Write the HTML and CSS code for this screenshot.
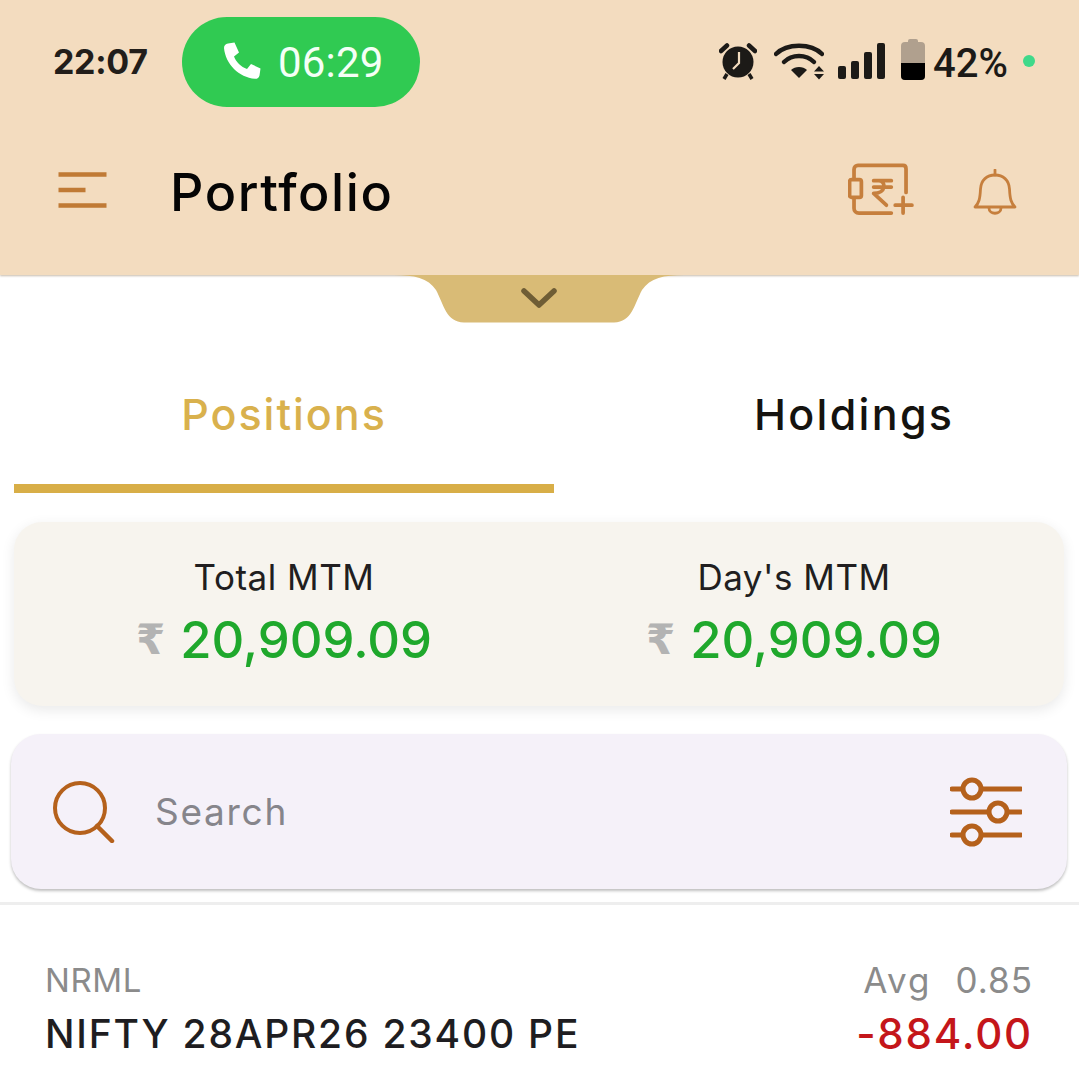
FILE: index.html
```html
<!DOCTYPE html>
<html lang="en">
<head>
<meta charset="utf-8">
<title>Portfolio</title>
<link rel="stylesheet" href="styles.css">
</head>
<body>
<div class="page">
  <header class="header">
    <div class="status">
      <span class="time">22:07</span>
      <div class="call">
        <svg class="call-icon" viewBox="0 0 40 40"><path d="M6 2.500 12.500 1.500 17 11.500 12 15.500C14 21 19 26 25 28L29 23 38.500 27.500 37.500 34.500C37 37 35 38 33 37.800 17 36.500 3.500 23 2 7 2 4.500 3.500 3 6 2.500Z" fill="#fff"/></svg>
        <span>06:29</span>
      </div>
      <div class="status-right">
        <svg class="alarm" viewBox="0 0 38 38"><circle cx="19" cy="20" r="15.500" fill="#1c1a17"/><path d="M2 9 8 3.500M36 9 30 3.500" stroke="#1c1a17" stroke-width="4.500" stroke-linecap="round"/><path d="M8 32 5 37M30 32 33 37" stroke="#1c1a17" stroke-width="3.500"/><path d="M20 10V21L14 27" fill="none" stroke="#f3dcbf" stroke-width="2.200"/></svg>
        <svg class="wifi" viewBox="0 0 50 38"><g fill="none" stroke="#1c1a17" stroke-width="4.500" stroke-linecap="round"><path d="M2 12C13 1 37 1 48 12"/><path d="M10 20C18 12 32 12 40 20"/></g><path d="M17 28C21 24 29 24 33 28L25 36Z" fill="#1c1a17"/><path d="M45 24 40 29.500H50ZM45 37.500 40 32H50Z" fill="#1c1a17"/></svg>
        <div class="signal"><i class="s1"></i><i class="s2"></i><i class="s3"></i><i class="s4"></i></div>
        <div class="battery"><b></b></div>
        <span class="pct">42%</span>
        <span class="dot"></span>
      </div>
    </div>
    <div class="appbar">
      <svg class="menu" viewBox="0 0 48 36"><path d="M0 2.500H48M0 18H27M0 33.500H48" stroke="#c07a35" stroke-width="4.500" fill="none"/></svg>
      <h1 class="title">Portfolio</h1>
      <svg class="wallet" viewBox="0 0 68 54"><g fill="none" stroke="#c67f3d" stroke-width="3.800" stroke-linecap="round" stroke-linejoin="round"><path d="M6 16V6.500C6 4 8 2.500 10 2.500H56C58 2.500 59 4 59 6V30"/><path d="M6 36V46C6 49 8 51 11 51H44"/><rect x="1.500" y="17" width="12" height="18" rx="2"/><path d="M26 18H44M26 24.500H44M31 18C39 18 39 31 26 31L39 43"/><path d="M56 35V51M48 43H65"/></g></svg>
      <svg class="bell" viewBox="0 0 44 48"><g fill="none" stroke="#c67f3d" stroke-width="2.800" stroke-linecap="round" stroke-linejoin="round"><path d="M2 38C6 34 7 30 7.500 20 8 11 14 6 22 6S36 11 36.500 20C37 30 38 34 42 38Z"/><path d="M22 1V6M16 39C16 46 28 46 28 39"/></g></svg>
    </div>
  </header>
  <div class="notch-wrap">
    <svg class="notch" viewBox="0 0 290 48"><path d="M0 0H290C270 0 256 3 248 15 240 30 238 47 220 47.500H70C52 47 50 30 42 15 34 3 20 0 0 0Z" fill="#d9bb76"/><path d="M130 16 145 30 160 16" fill="none" stroke="#6f5d35" stroke-width="5.500" stroke-linecap="round" stroke-linejoin="round"/></svg>
  </div>
  <nav class="tabs">
    <div class="tab active">Positions</div>
    <div class="tab other">Holdings</div>
  </nav>
  <section class="mtm">
    <div class="mtm-col">
      <div class="mtm-label">Total MTM</div>
      <div class="mtm-value"><span class="rupee">₹</span><span>20,909.09</span></div>
    </div>
    <div class="mtm-col">
      <div class="mtm-label">Day's MTM</div>
      <div class="mtm-value"><span class="rupee">₹</span><span>20,909.09</span></div>
    </div>
  </section>
  <section class="search">
    <svg class="search-icon" viewBox="0 0 62 62"><circle cx="27" cy="27" r="25" fill="none" stroke="#b5611c" stroke-width="4"/><path d="M44 45 59 60" stroke="#b5611c" stroke-width="4.500" stroke-linecap="round"/></svg>
    <span class="placeholder">Search</span>
    <svg class="filter-icon" viewBox="0 0 72 70"><g fill="none" stroke="#b5611c" stroke-width="5" stroke-linecap="round"><path d="M2 12H71M2 35H71M2 58H71"/><g fill="#f5f1f9"><circle cx="22" cy="12" r="9"/><circle cx="48" cy="35" r="9"/><circle cx="22" cy="58" r="9"/></g></g></svg>
  </section>
  <div class="divider"></div>
  <article class="row">
    <div class="row-left">
      <div class="type">NRML</div>
      <div class="symbol">NIFTY 28APR26 23400 PE</div>
    </div>
    <div class="row-right">
      <div class="avg"><span class="avg-label">Avg</span><span>0.85</span></div>
      <div class="pnl">-884.00</div>
    </div>
  </article>
</div>
</body>
</html>
```
FILE: styles.css
```css
* { box-sizing: border-box; }
html, body { margin: 0; padding: 0; background: #fff; }
body { font-family: "Inter", "Liberation Sans", sans-serif; }
.page { width: 1079px; height: 1078px; overflow: hidden; background: #fff; }

.header { height: 275px; background: #f3dcbf; box-shadow: 0 1px 2px rgba(90, 60, 20, .35); position: relative; z-index: 1; }
.status { height: 124px; display: flex; align-items: center; padding-left: 53px; }
.time { width: 129px; font-family: "Inter", sans-serif; font-size: 34px; font-weight: 700; color: #221e1a; letter-spacing: -.3px; margin-top: -2px; }
.call { width: 238px; height: 90px; border-radius: 45px; background: #30ca52; display: flex; align-items: center; padding-left: 40px; gap: 16px; color: #f4fff6; font-family: "Roboto", sans-serif; font-size: 42px; font-weight: 400; letter-spacing: .2px; }
.call-icon { width: 40px; height: 40px; flex: none; margin-top: -2px; }
.status-right { margin-left: auto; margin-top: -2px; display: flex; align-items: center; padding-right: 44px; }
.alarm { width: 38px; height: 38px; margin-right: 17px; margin-left: 2px; }
.wifi { width: 50px; height: 38px; margin-right: 14px; }
.signal { display: flex; align-items: flex-end; gap: 5px; height: 36px; margin-right: 16px; }
.signal i { display: block; width: 8px; background: #1c1a17; border-radius: 2px; }
.s1 { height: 13px; } .s2 { height: 18px; } .s3 { height: 27px; } .s4 { height: 36px; }
.battery { width: 24px; height: 38px; border-radius: 4px; background: #b0a08e; position: relative; margin-right: 8px; margin-top: -1px; }
.battery::before { content: ""; position: absolute; left: 7px; top: -3px; width: 10px; height: 4px; background: #b0a08e; border-radius: 2px 2px 0 0; }
.battery b { position: absolute; left: 0; right: 0; bottom: 0; height: 17px; background: #000; border-radius: 0 0 4px 4px; }
.pct { font-family: "Roboto", sans-serif; font-size: 40px; font-weight: 500; color: #1c1a17; width: 90px; margin-top: 4px; }
.dot { width: 12px; height: 12px; border-radius: 50%; background: #3fd98a; }

.appbar { height: 136px; display: flex; align-items: center; padding: 0 64px 0 58px; }
.menu { width: 49px; height: 36px; flex: none; margin-top: -4px; }
.title { margin: 0 0 0 63px; font-family: "Inter", sans-serif; font-size: 52px; font-weight: 500; color: #050505; letter-spacing: 1.600px; flex: 1; }
.wallet { width: 67px; height: 53px; margin-right: 58px; margin-top: -6px; margin-left: -1px; }
.bell { width: 44px; height: 48px; margin-top: 2px; margin-right: -2px; }

.notch-wrap { height: 48px; display: flex; justify-content: center; margin-left: -1px; position: relative; z-index: 2; }
.notch { width: 290px; height: 48px; }

.tabs { display: flex; padding-left: 14px; height: 170px; }
.tab { font-family: "Inter", sans-serif; font-size: 43px; font-weight: 500; letter-spacing: 2px; padding-top: 65px; }
.tab.active { width: 540px; text-align: center; color: #d9b14d; border-bottom: 9px solid #d8ae47; height: 170px; }
.tab.other { padding-left: 200px; color: #15130f; letter-spacing: 2.300px; }

.mtm { margin: 29px 15px 0 14px; height: 184px; border-radius: 28px; background: #f7f4ee; box-shadow: 0 4px 14px rgba(0, 0, 0, .09); display: grid; grid-template-columns: 510px 510px; padding: 0 15px; }
.mtm-col { display: flex; flex-direction: column; align-items: center; padding-top: 33px; }
.mtm-label { font-size: 35px; color: #211e20; line-height: 44px; letter-spacing: .5px; }
.mtm-value { margin-top: 11px; display: flex; align-items: center; gap: 15px; color: #1fa82c; font-size: 50.800px; font-weight: 500; line-height: 60px; }
.rupee { color: #b3b3b3; font-family: "DejaVu Sans", sans-serif; font-size: 42px; font-weight: 700; }

.search { margin: 28px 12px 0 11px; height: 155px; border-radius: 30px; background: #f5f1f9; box-shadow: 0 2px 3px rgba(0, 0, 0, .25); display: flex; align-items: center; padding: 0 44px 0 42px; }
.search-icon { width: 62px; height: 62px; }
.placeholder { margin-left: 40px; flex: 1; font-size: 37px; color: #86858b; letter-spacing: 1.700px; }
.filter-icon { width: 72px; height: 70px; margin-left: -1px; margin-right: 1px; }

.divider { height: 3px; margin-top: 13px; background: #eeeeee; }

.row { display: flex; justify-content: space-between; padding: 54px 46px 0 45px; }
.type { font-size: 33px; color: #8b8b8b; line-height: 42px; letter-spacing: .6px; }
.symbol { font-size: 39px; font-weight: 500; color: #1e1d21; letter-spacing: 1.800px; line-height: 50px; margin-top: 8px; }
.row-right { text-align: right; }
.avg { display: flex; gap: 24px; justify-content: flex-end; font-size: 35px; color: #8b8b8b; line-height: 42px; letter-spacing: 1px; }
.avg-label { letter-spacing: 2px; }
.pnl { font-size: 42px; font-weight: 500; color: #c4161a; line-height: 50px; margin-top: 8px; letter-spacing: 1.800px; }
```
